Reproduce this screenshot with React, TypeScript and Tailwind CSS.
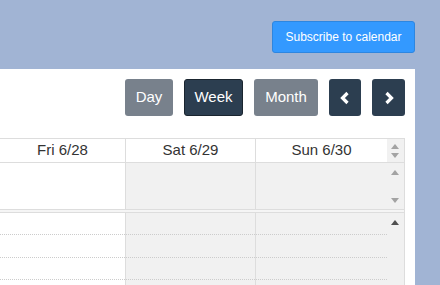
const font = { fontFamily: '"Liberation Sans", Arial, sans-serif' };

function Up({ dark }: { dark?: boolean }) {
  return (
    <div
      className={
        "w-0 h-0 border-x-[4px] border-x-transparent border-b-[5px] " +
        (dark ? "border-b-[#505050]" : "border-b-[#a3a3a3]")
      }
    />
  );
}

function Down() {
  return <div className="w-0 h-0 border-x-[4px] border-x-transparent border-t-[5px] border-t-[#a3a3a3]" />;
}

function Slots({ gray }: { gray?: boolean }) {
  return (
    <div className={"flex flex-col h-full " + (gray ? "bg-[#f1f1f1]" : "bg-white")}>
      <div className="h-[22px] shrink-0 border-b border-dotted border-[#ccc]" />
      <div className="h-[23px] shrink-0 border-b border-dotted border-[#ccc]" />
      <div className="h-[22px] shrink-0 border-b border-dotted border-[#ccc]" />
      <div className="h-[22px] shrink-0" />
    </div>
  );
}

export default function App() {
  return (
    <div className="w-[440px] h-[285px] bg-[#a1b4d4] overflow-hidden flex flex-col" style={font}>
      <div className="h-[69px] shrink-0 flex justify-end items-start pt-[21px] pr-[25px]">
        <div className="w-[143px] h-[32px] bg-[#3399ff] border border-[#2d86e0] rounded-[3px] text-white text-[12px] flex items-center justify-center">
          Subscribe to calendar
        </div>
      </div>
      <div className="w-[415px] flex-1 bg-white flex flex-col">
        <div className="h-[69px] shrink-0 flex justify-end items-start pt-[10px] pr-[10px] gap-[11px] text-white text-[15px]">
          <div className="w-[48px] h-[37px] bg-[#78818c] rounded-[3px] flex items-center justify-center">Day</div>
          <div className="w-[59px] h-[37px] bg-[#2c3e50] border border-[#1a252f] rounded-[3px] flex items-center justify-center">Week</div>
          <div className="w-[64px] h-[37px] bg-[#78818c] rounded-[3px] flex items-center justify-center">Month</div>
          <div className="w-[32px] h-[37px] bg-[#2c3e50] rounded-[3px] flex items-center justify-center">
            <svg width="12" height="14" viewBox="0 0 12 14">
              <path d="M8.5 2 L3.5 7 L8.5 12" fill="none" stroke="white" strokeWidth="3.2" />
            </svg>
          </div>
          <div className="w-[33px] h-[37px] bg-[#2c3e50] rounded-[3px] flex items-center justify-center">
            <svg width="12" height="14" viewBox="0 0 12 14">
              <path d="M3.5 2 L8.5 7 L3.5 12" fill="none" stroke="white" strokeWidth="3.2" />
            </svg>
          </div>
        </div>
        <div className="w-[405px] flex-1 border-t border-r border-[#ddd] flex flex-col text-[#333]">
          {/* header */}
          <div className="h-[24px] shrink-0 grid grid-cols-[125px_130px_132px_17px] border-b border-[#ddd] text-[15px]">
            <div className="flex items-center justify-center">Fri 6/28</div>
            <div className="flex items-center justify-center border-l border-[#ddd]">Sat 6/29</div>
            <div className="flex items-center justify-center border-l border-[#ddd]">Sun 6/30</div>
            <div className="bg-[#f1f1f1] flex flex-col items-center justify-center gap-[4px] pr-[1px]">
              <Up />
              <Down />
            </div>
          </div>
          {/* all day */}
          <div className="h-[47px] shrink-0 grid grid-cols-[125px_130px_132px_17px] border-b border-[#ddd]">
            <div className="bg-white" />
            <div className="bg-[#f1f1f1] border-l border-[#ddd]" />
            <div className="bg-[#f1f1f1] border-l border-[#ddd]" />
            <div className="bg-[#f1f1f1] flex flex-col items-center justify-between pt-[7px] pb-[6px] pr-[1px]">
              <Up />
              <Down />
            </div>
          </div>
          <div className="h-[3px] shrink-0 bg-[#f5f5f5] border-b border-[#ddd]" />
          {/* body */}
          <div className="flex-1 grid grid-cols-[125px_130px_132px_17px]">
            <Slots />
            <div className="border-l border-[#ddd]">
              <Slots gray />
            </div>
            <div className="border-l border-[#ddd]">
              <Slots gray />
            </div>
            <div className="bg-[#f1f1f1] flex flex-col items-center pt-[7px] pr-[1px]">
              <Up dark />
            </div>
          </div>
        </div>
      </div>
    </div>
  );
}
